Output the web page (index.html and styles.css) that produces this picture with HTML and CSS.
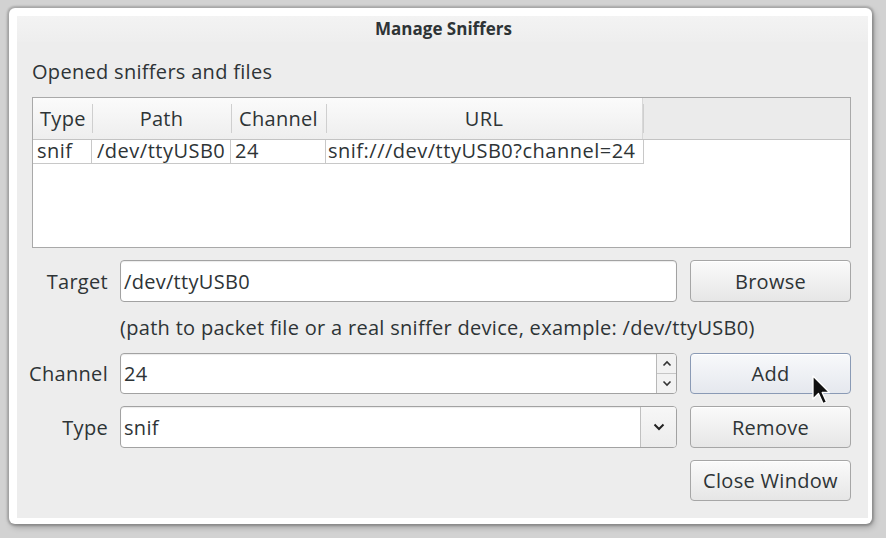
FILE: index.html
```html
<!DOCTYPE html>
<html>
<head>
<meta charset="utf-8">
<link rel="stylesheet" href="styles.css">
</head>
<body>
<div class="frame">
  <div class="window">
    <div class="titlebar">Manage Sniffers</div>
    <div class="content">
      <div class="section-label">Opened sniffers and files</div>
      <div class="table">
        <div class="thead">
          <div class="th c-type left">Type</div>
          <div class="th c-path">Path</div>
          <div class="th c-chan">Channel</div>
          <div class="th c-url">URL</div>
          <div class="th c-fill"></div>
        </div>
        <div class="trow">
          <div class="td c-type">snif</div>
          <div class="td c-path">/dev/ttyUSB0</div>
          <div class="td c-chan">24</div>
          <div class="td c-url">snif:///dev/ttyUSB0?channel=24</div>
        </div>
      </div>
      <div class="form">
        <div class="label">Target</div>
        <div class="field"><span class="value">/dev/ttyUSB0</span></div>
        <div class="btn">Browse</div>

        <div></div>
        <div class="hint">(path to packet file or a real sniffer device, example: /dev/ttyUSB0)</div>
        <div></div>

        <div class="label">Channel</div>
        <div class="field spin">
          <span class="value">24</span>
          <div class="spinner">
            <div class="sp-half"><svg width="10" height="7" viewBox="0 0 10 7"><path d="M1.5 5.5 L5 2 L8.5 5.5" fill="none" stroke="#333" stroke-width="1.6"/></svg></div>
            <div class="sp-half"><svg width="10" height="7" viewBox="0 0 10 7"><path d="M1.5 1.5 L5 5 L8.5 1.5" fill="none" stroke="#333" stroke-width="1.6"/></svg></div>
          </div>
        </div>
        <div class="btn btn-hover">Add
          <svg class="cursor" width="22" height="32" viewBox="0 0 22 32"><path d="M1 1 L1 24 L6.5 18.5 L11 28.5 L14.5 27 L10.2 17.5 L17.5 17.5 Z" fill="#111" stroke="#fff" stroke-width="1.3" stroke-linejoin="round"/></svg>
        </div>

        <div class="label">Type</div>
        <div class="field combo">
          <span class="value">snif</span>
          <div class="drop"><svg width="12" height="8" viewBox="0 0 12 8"><path d="M1.5 1.5 L6 6 L10.5 1.5" fill="none" stroke="#222" stroke-width="2"/></svg></div>
        </div>
        <div class="btn">Remove</div>

        <div></div>
        <div></div>
        <div class="btn">Close Window</div>
      </div>
    </div>
  </div>
</div>
</body>
</html>
```

FILE: styles.css
```css
html, body {
  margin: 0;
  padding: 0;
}
body {
  width: 886px;
  height: 538px;
  background: #d2d2d2;
  font-family: "Open Sans", "DejaVu Sans", sans-serif;
  color: #2e3436;
  overflow: hidden;
}
.frame {
  box-sizing: border-box;
  margin: 8px 0 0 9px;
  width: 863px;
  height: 516px;
  background: #ffffff;
  border-radius: 6px;
  padding: 8px 4px 6px 8px;
  box-shadow: 0 0 2px 2px rgba(0,0,0,0.18), 2px 3px 6px rgba(0,0,0,0.25);
}
.window {
  height: 100%;
  background: #ededed;
  display: flex;
  flex-direction: column;
}
.titlebar {
  height: 26px;
  line-height: 26px;
  text-align: center;
  font-weight: bold;
  font-size: 17px;
  color: #2e3436;
  background: linear-gradient(#f3f3f3, #eeeeee);
  padding-left: 2px;
}
.content {
  padding: 0 17px 0 15px;
  font-size: 20px;
  letter-spacing: 0.3px;
}
.section-label {
  height: 55px;
  line-height: 1;
  padding-top: 20px;
  box-sizing: border-box;
}
.table {
  height: 151px;
  box-sizing: border-box;
  border: 1px solid #a9a9a9;
  background: #ffffff;
}
.thead {
  display: flex;
  height: 41px;
  border-bottom: 1px solid #c3c3c3;
  background: linear-gradient(#fbfbfb, #eeeeee);
}
.th {
  position: relative;
  display: flex;
  align-items: center;
  justify-content: center;
  height: 100%;
  box-sizing: border-box;
}
.th.left { justify-content: flex-start; padding-left: 7px; }
.th + .th::before {
  content: "";
  position: absolute;
  left: 0;
  top: 6px;
  bottom: 6px;
  width: 1px;
  background: #cfcfcf;
}
.th.c-fill {
  flex: 1;
  background: #ebebeb;
}
.c-type { width: 59px; flex: none; }
.c-path { width: 139px; flex: none; }
.c-chan { width: 95px; flex: none; }
.c-url { width: 317px; flex: none; }
.th.c-url { border-right: 1px solid #d8d8d8; }
.trow {
  display: flex;
  height: 24px;
}
.td {
  box-sizing: border-box;
  border-right: 1px solid #c8c8c8;
  border-bottom: 1px solid #c8c8c8;
  padding-left: 4px;
  line-height: 22px;
  white-space: nowrap;
  letter-spacing: 0.5px;
}
.td.c-type { padding-left: 4px; }
.td.c-path { padding-left: 5px; }
.td.c-url { width: 318px; padding-left: 2px; }
.form {
  display: grid;
  grid-template-columns: 76px minmax(0, 1fr) 161px;
  grid-template-rows: 42px 27px 41px 42px 41px;
  column-gap: 12px;
  row-gap: 12px;
  margin-top: 12px;
}
.label {
  display: flex;
  align-items: center;
  justify-content: flex-end;
}
.field {
  box-sizing: border-box;
  border: 1px solid #a2a2a2;
  border-radius: 4px;
  background: #ffffff;
  display: flex;
  align-items: center;
  box-shadow: inset 0 1px 1px rgba(0,0,0,0.08);
  margin-right: 1px;
}
.value {
  flex: 1;
  padding-left: 3px;
}
.spinner {
  width: 19px;
  height: 100%;
  border-left: 1px solid #b8b8b8;
  display: flex;
  flex-direction: column;
  background: #f2f2f2;
  border-radius: 0 3px 3px 0;
}
.sp-half {
  flex: 1;
  display: flex;
  align-items: center;
  justify-content: center;
}
.sp-half + .sp-half { border-top: 1px solid #c6c6c6; }
.drop {
  width: 35px;
  height: 100%;
  border-left: 1px solid #c0c0c0;
  display: flex;
  align-items: center;
  justify-content: center;
  background: linear-gradient(#f7f7f7, #ececec);
  border-radius: 0 3px 3px 0;
}
.hint {
  display: flex;
  align-items: center;
  white-space: nowrap;
}
.btn {
  position: relative;
  box-sizing: border-box;
  border: 1px solid #a6a6a6;
  border-radius: 4px;
  background: linear-gradient(#fafafa, #e6e6e6);
  display: flex;
  align-items: center;
  justify-content: center;
  box-shadow: inset 0 1px 0 #ffffff;
}
.btn-hover {
  border-color: #8a9ab5;
  background: linear-gradient(#f8f9fb, #e5e8ee);
}
.cursor {
  position: absolute;
  left: 121px;
  top: 21px;
}
```
